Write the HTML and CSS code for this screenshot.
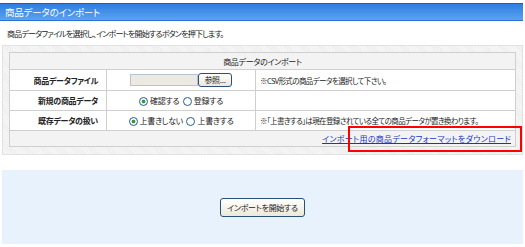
FILE: index.html
```html
<!DOCTYPE html>
<html lang="ja">
<head>
    <meta charset="UTF-8">
    <title>商品データのインポート</title>
    <link rel="stylesheet" href="styles.css">
</head>
<body>
    <div class="page">
        <h1 class="page-title">商品データのインポート</h1>
        <p class="lead">商品データファイルを選択し、インポートを開始するボタンを押下します。</p>

        <div class="form-box">
            <table class="form-table">
                <colgroup>
                    <col class="col-label">
                    <col class="col-field">
                    <col>
                </colgroup>
                <tr>
                    <th colspan="3" class="caption">商品データのインポート</th>
                </tr>
                <tr class="row-file">
                    <th class="label">商品データファイル</th>
                    <td class="field"><input type="text" class="file-path" readonly><button class="btn btn-small">参照...</button></td>
                    <td class="note">※CSV形式の商品データを選択して下さい。</td>
                </tr>
                <tr>
                    <th class="label">新規の商品データ</th>
                    <td class="field">
                        <label class="radio"><input type="radio" name="new" checked>確認する</label>
                        <label class="radio"><input type="radio" name="new">登録する</label>
                    </td>
                    <td class="note"></td>
                </tr>
                <tr>
                    <th class="label">既存データの扱い</th>
                    <td class="field">
                        <label class="radio"><input type="radio" name="old" checked>上書きしない</label>
                        <label class="radio"><input type="radio" name="old">上書きする</label>
                    </td>
                    <td class="note">※「上書きする」は現在登録されている全ての商品データが置き換わります。</td>
                </tr>
                <tr>
                    <td colspan="3" class="foot"><a href="#" class="download">インポート用の商品データフォーマットをダウンロード</a></td>
                </tr>
            </table>
            <div class="highlight"></div>
        </div>

        <div class="action-panel">
            <button class="btn">インポートを開始する</button>
        </div>
    </div>
</body>
</html>
```

FILE: styles.css
```css
body {
    margin: 0;
    font-family: "Noto Sans CJK JP", sans-serif;
    font-size: 8px;
    letter-spacing: -0.3px;
    font-feature-settings: "palt";
    color: #222;
    background-color: #fff;
}

.page {
    padding-top: 3px;
}

.page-title {
    margin: 0 2px 0 0;
    height: 16px;
    line-height: 16px;
    padding-left: 5px;
    font-size: 9.5px;
    letter-spacing: -0.2px;
    font-weight: normal;
    color: #fff;
    background: linear-gradient(#2f7de0, #5aa3f0);
    border-top: 1px solid #1a5cc8;
    border-bottom: 1px solid #2c6fd6;
}

.lead {
    margin: 0;
    padding: 7px 0 0 7px;
    height: 11px;
    line-height: 11px;
    letter-spacing: -0.8px;
}

.form-box {
    position: relative;
    margin: 6px 2px 0 2px;
    padding: 6px 6px 7px;
    background-color: #eeeeee;
    background-image: repeating-linear-gradient(45deg, rgba(255,255,255,0.5) 0 1px, transparent 1px 2px);
    border: 1px solid #e2e2e2;
}

.form-table {
    width: 100%;
    border-collapse: collapse;
    background-color: #fff;
    table-layout: fixed;
}

.col-label {
    width: 97px;
}

.col-field {
    width: 149px;
}

.form-table th,
.form-table td {
    border: 1px solid #cfcfcf;
    padding: 0;
    line-height: 11px;
    white-space: nowrap;
}

.caption {
    height: 16px;
    font-weight: normal;
    background-color: #f3f3f3;
    text-align: center;
}

.label {
    height: 19px;
    padding-right: 8px !important;
    text-align: right;
    font-weight: bold;
}

.row-file .label {
    height: 20px;
}

.field {
    text-align: center;
}

.note {
    padding-left: 4px !important;
    font-size: 7.5px;
    letter-spacing: -0.6px;
}

.file-path {
    width: 68px;
    height: 12px;
    box-sizing: border-box;
    vertical-align: middle;
    margin: 0;
    border: 1px solid #b7c4cf;
    background-color: #ece9e2;
}

.btn {
    font-family: inherit;
    font-size: 8px;
    letter-spacing: -0.3px;
    font-feature-settings: "palt";
    white-space: nowrap;
    color: #222;
    padding: 0 6px;
    height: 19px;
    border: 1px solid #2b4f7a;
    border-radius: 3px;
    background: linear-gradient(#ffffff, #ece9d8);
    vertical-align: middle;
}

.btn-small {
    height: 14px;
    width: 34px;
    padding: 0;
    line-height: 12px;
}

.radio {
    margin: 0 1px;
}

.radio input {
    appearance: none;
    width: 9px;
    height: 9px;
    margin: 0 2px 0 0;
    border: 1px solid #2a5b8f;
    border-radius: 50%;
    background-color: #fff;
    vertical-align: -2px;
}

.radio input:checked {
    background: radial-gradient(circle, #2da12d 0 1.6px, #fff 2.2px);
}

.foot {
    height: 15px;
    background-color: #f3f3f3;
    text-align: right;
    padding-right: 4px !important;
}

.download {
    color: #1a35c4;
    text-decoration: underline;
    font-size: 8px;
    letter-spacing: 0.3px;
}

.highlight {
    position: absolute;
    left: 345px;
    top: 80px;
    width: 170px;
    height: 22px;
    border: 2px solid #f00;
}

.action-panel {
    margin: 15px 2px 0 2px;
    height: 74px;
    background-color: #e8f2fd;
    display: flex;
    align-items: center;
    justify-content: center;
}
```
